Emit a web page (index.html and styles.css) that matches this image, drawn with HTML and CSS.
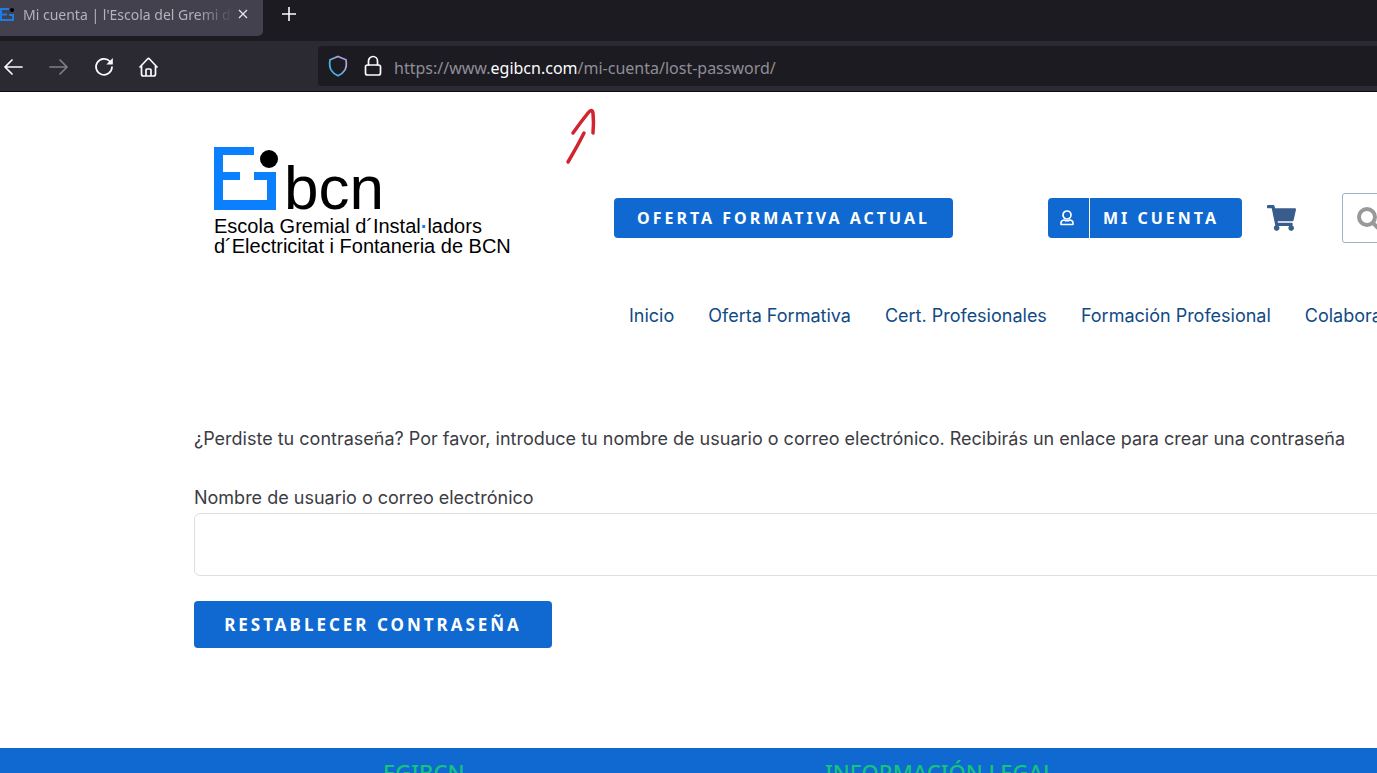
FILE: index.html
```html
<!DOCTYPE html>
<html lang="es">
<head>
  <meta charset="UTF-8">
  <title>Mi cuenta | l'Escola del Gremi d'Instal·ladors</title>
  <link rel="stylesheet" href="styles.css">
</head>
<body>
  <div class="browser">
    <div class="tabs">
      <div class="tab">
        <svg class="favicon" width="15" height="16" viewBox="0 0 15 16">
          <path d="M9 3H1v11h12V9H9M1 8.500h6" fill="none" stroke="#1a7de8" stroke-width="2"/>
          <circle cx="12" cy="4" r="2" fill="#000"/>
        </svg>
        <span class="tab-title">Mi cuenta | l'Escola del Gremi d'</span>
        <button class="tab-close" aria-label="Cerrar">
          <svg width="10" height="10" viewBox="0 0 10 10"><path d="M1 1l8 8M9 1l-8 8" stroke="#e5e5ea" stroke-width="1.300"/></svg>
        </button>
      </div>
      <button class="new-tab" aria-label="Nueva pestaña">
        <svg width="16" height="16" viewBox="0 0 16 16"><path d="M8 1v14M1 8h14" stroke="#fbfbfe" stroke-width="1.600"/></svg>
      </button>
    </div>
    <div class="toolbar">
      <div class="toolbar-buttons">
        <button aria-label="Atrás">
          <svg width="20" height="20" viewBox="0 0 20 20"><path d="M18 10H1M8 3L1 10l7 7" class="line"/></svg>
        </button>
        <button aria-label="Adelante" disabled>
          <svg width="20" height="20" viewBox="0 0 20 20"><path d="M1 10h17M11 3l7 7-7 7" class="line"/></svg>
        </button>
        <button aria-label="Recargar">
          <svg width="20" height="20" viewBox="0 0 20 20"><path d="M16 4.500A8 8 0 1 0 18 10" class="line"/><path d="M18.800 1v6.500h-6.500z" fill="#fbfbfe"/></svg>
        </button>
        <button aria-label="Inicio">
          <svg width="20" height="20" viewBox="0 0 20 20"><path d="M1 10l7.500-8q1-1 2 0l7.500 8M2.500 9v8q0 2 2 2h10q2 0 2-2V9M7 19v-6q0-1 1-1h3q1 0 1 1v6" class="line"/></svg>
        </button>
      </div>
      <div class="urlbar">
        <svg width="20" height="22" viewBox="0 0 20 22">
          <defs>
            <linearGradient id="shield" x1="1" y1="0" x2="0" y2="1">
              <stop offset="0.300" stop-color="#a9a5e0"/>
              <stop offset="0.700" stop-color="#42b8e8"/>
            </linearGradient>
          </defs>
          <path d="M10 1.500l8 3.300q1 6-1 10-2 3.500-7 6-5-2.500-7-6-2-4-1-10z" fill="none" stroke="url(#shield)" stroke-width="1.700"/>
        </svg>
        <svg width="18" height="22" viewBox="0 0 18 22">
          <path d="M4.500 10V6a4.500 4.500 0 0 1 9 0v4" class="line"/>
          <rect x="1.500" y="10" width="15" height="10" rx="2" class="line"/>
        </svg>
        <span class="url">https://www.<b>egibcn.com</b>/mi-cuenta/lost-password/</span>
      </div>
    </div>
  </div>

  <svg class="arrow" width="32" height="58" viewBox="0 0 32 58">
    <path d="M3 54Q13 37 19 25M8 25Q15 15 23 5q4-5 5 0 1 9 0 20" fill="none" stroke="#d2232e" stroke-width="3.500" stroke-linecap="round"/>
  </svg>

  <header class="header">
    <a class="logo" href="#">
      <span class="logo-top">
        <svg width="66" height="64" viewBox="0 0 66 64">
          <path d="M0 1h40v8H9v17h17v8H9v20h44V34H40v-8h22v38H0z" fill="#0a80ff"/>
          <circle cx="55" cy="13" r="9" fill="#000"/>
        </svg>
        <span class="logo-name">bcn</span>
      </span>
      <span class="logo-text">Escola Gremial d´Instal<i>·</i>ladors<br>d´Electricitat i Fontaneria de BCN</span>
    </a>
    <div class="header-right">
      <div class="actions">
        <a class="btn offer" href="#">Oferta formativa actual</a>
        <a class="btn account" href="#">
          <span class="account-icon">
            <svg width="14" height="16" viewBox="0 0 14 16">
              <circle cx="7" cy="5" r="4" fill="none" stroke="#fff" stroke-width="1.700"/>
              <path d="M4 10q-3 .5-3 3v1.500h12V13q0-2.500-3-3-3 1.500-6 0z" fill="none" stroke="#fff" stroke-width="1.600" stroke-linejoin="round"/>
            </svg>
          </span>
          <span class="account-label">Mi cuenta</span>
        </a>
        <a class="cart" href="#" aria-label="Carrito">
          <svg width="29" height="26" viewBox="0 0 576 512" fill="#385c8c"><path d="M528.120 301.319l47.273-208C578.806 78.301 567.391 64 551.990 64H159.208l-9.166-44.810C147.758 8.021 137.930 0 126.529 0H24C10.745 0 0 10.745 0 24v16c0 13.255 10.745 24 24 24h69.883l70.248 343.435C147.325 417.100 136 435.222 136 456c0 30.928 25.072 56 56 56s56-25.072 56-56c0-15.674-6.447-29.835-16.824-40h209.647C430.447 426.165 424 440.326 424 456c0 30.928 25.072 56 56 56s56-25.072 56-56c0-22.172-12.888-41.332-31.579-50.405l5.517-24.276C513.351 366.301 501.936 352 486.535 352H218.117l-6.545-32h293.145c11.206 0 20.920-7.754 23.403-18.681z"/></svg>
        </a>
        <button class="search" aria-label="Buscar">
          <svg width="24" height="24" viewBox="0 0 24 24"><circle cx="10" cy="11" r="8" fill="none" stroke="#999" stroke-width="4"/><path d="M16 17l6 6" stroke="#999" stroke-width="4"/></svg>
        </button>
      </div>
      <nav class="menu">
        <a href="#">Inicio</a>
        <a href="#">Oferta Formativa</a>
        <a href="#">Cert. Profesionales</a>
        <a href="#">Formación Profesional</a>
        <a href="#">Colaboradores</a>
      </nav>
    </div>
  </header>

  <main class="content">
    <form>
      <p>¿Perdiste tu contraseña? Por favor, introduce tu nombre de usuario o correo electrónico. Recibirás un enlace para crear una contraseña</p>
      <label for="user_login">Nombre de usuario o correo electrónico</label>
      <input type="text" id="user_login" name="user_login">
      <button type="submit" class="btn submit">Restablecer contraseña</button>
    </form>
  </main>

  <footer class="footer">
    <h4>EGIBCN</h4>
    <h4>INFORMACIÓN LEGAL</h4>
  </footer>
</body>
</html>
```
FILE: styles.css
```css
* {
  box-sizing: border-box;
}
body {
  margin: 0;
  height: 100vh;
  overflow: hidden;
  display: flex;
  flex-direction: column;
  background: #fff;
  color: #3c3c44;
  font-family: Inter, "Noto Sans", sans-serif;
  font-size: 18px;
}
a {
  text-decoration: none;
}
button {
  border: none;
  background: none;
  padding: 0;
  cursor: pointer;
}
svg {
  display: block;
  flex-shrink: 0;
}

/* browser bar */
.browser {
  flex-shrink: 0;
  background: #2b2a33;
  border-bottom: 1px solid #0c0c0d;
  font-family: "Noto Sans", sans-serif;
}
.tabs {
  display: flex;
  height: 41px;
  background: #1c1b22;
}
.tab {
  display: flex;
  align-items: center;
  width: 263px;
  height: 36px;
  padding: 0 15px 8px 0;
  background: #42414d;
  border-radius: 0 0 5px 0;
}
.tab-title {
  flex: 1;
  margin: 0 4px 0 8px;
  overflow: hidden;
  white-space: nowrap;
  font-size: 14px;
  color: #b4b3bb;
  -webkit-mask-image: linear-gradient(to right, #000 82%, transparent);
  mask-image: linear-gradient(to right, #000 82%, transparent);
}
.new-tab {
  margin-left: 18px;
  padding-bottom: 13px;
}
.toolbar {
  display: flex;
  align-items: center;
  height: 50px;
}
.toolbar-buttons {
  display: flex;
  gap: 25px;
  width: 318px;
  padding: 2px 0 0 4px;
}
.toolbar-buttons button:disabled {
  opacity: 0.4;
}
.line {
  fill: none;
  stroke: #fbfbfe;
  stroke-width: 1.700;
  stroke-linecap: round;
  stroke-linejoin: round;
}
.urlbar {
  flex: 1;
  display: flex;
  align-items: center;
  height: 40px;
  padding-left: 10px;
  gap: 16px;
  background: #1c1b22;
  border-radius: 4px 0 0 4px;
}
.url {
  margin-left: -4px;
  padding-top: 3px;
  font-size: 16px;
  color: #8f8e96;
}
.url b {
  font-weight: normal;
  color: #fbfbfe;
}
.arrow {
  position: absolute;
  left: 565px;
  top: 108px;
}

/* header */
.header {
  display: flex;
  flex-shrink: 0;
  padding: 54px 0 0 214px;
}
.logo {
  width: 400px;
  flex-shrink: 0;
  color: #000;
  font-family: "Liberation Sans", Arial, sans-serif;
}
.logo-top {
  display: flex;
  align-items: flex-end;
  height: 64px;
  gap: 4px;
}
.logo-name {
  font-size: 62px;
  line-height: 44px;
}
.logo-text {
  display: block;
  margin-top: 6px;
  font-size: 20px;
  line-height: 20px;
}
.logo-text i {
  font-style: normal;
  font-weight: bold;
  color: #0a80ff;
}
.header-right {
  flex: 1;
  padding-top: 47px;
  white-space: nowrap;
}
.actions {
  display: flex;
  align-items: center;
  height: 50px;
}
.btn {
  display: flex;
  align-items: center;
  justify-content: center;
  flex-shrink: 0;
  height: 40px;
  background: #0f69d0;
  border-radius: 4px;
  color: #fff;
  font-family: "Noto Sans", sans-serif;
  font-size: 16px;
  font-weight: bold;
  letter-spacing: 3px;
  text-transform: uppercase;
}
.offer {
  width: 339px;
}
.account {
  width: 194px;
  margin-left: 95px;
}
.account-icon {
  display: flex;
  align-items: center;
  height: 40px;
  padding: 0 15px 0 12px;
  border-right: 1px solid #fff;
}
.account-label {
  flex: 1;
  padding-left: 13px;
}
.cart {
  margin-left: 25px;
}
.search {
  flex-shrink: 0;
  width: 50px;
  height: 50px;
  margin-left: 46px;
  padding-left: 14px;
  border: 1px solid #9ab4c8;
  border-radius: 3px;
}
.menu {
  display: flex;
  gap: 34px;
  margin-top: 60px;
  padding-left: 15px;
  line-height: 26px;
}
.menu a {
  color: #0f4a86;
}

/* form */
.content {
  flex-shrink: 0;
  padding: 96px 0 100px 194px;
  white-space: nowrap;
}
.content p {
  margin: 0 0 31px;
  line-height: 28px;
}
.content label {
  display: block;
  line-height: 28px;
}
.content input {
  display: block;
  width: calc(100% + 20px);
  height: 63px;
  margin: 1px 0 25px;
  padding: 0 16px;
  border: 1px solid #dedede;
  border-radius: 6px;
  font: inherit;
}
.submit {
  width: 358px;
  height: 47px;
  font-size: 17px;
}

/* footer */
.footer {
  flex: 1;
  min-height: 25px;
  display: grid;
  grid-template-columns: 442px 1fr;
  padding: 8px 0 0 383px;
  overflow: hidden;
  background: #0f69d0;
}
.footer h4 {
  margin: 0;
  font-family: "Noto Sans", sans-serif;
  font-size: 22px;
  line-height: 32px;
  font-weight: 500;
  color: #14c47c;
}
```
